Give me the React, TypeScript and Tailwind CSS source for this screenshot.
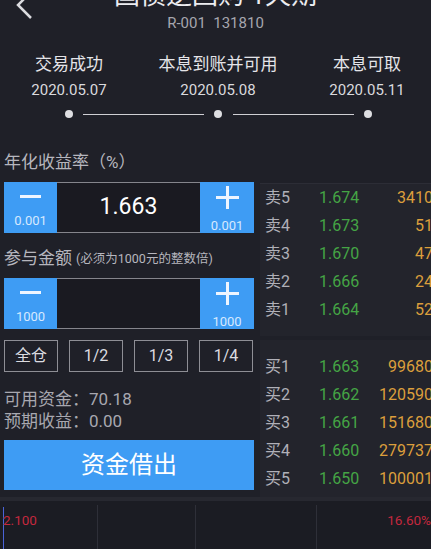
import React from "react";

const sells = [
  { label: "卖5", price: "1.674", vol: "3410" },
  { label: "卖4", price: "1.673", vol: "51" },
  { label: "卖3", price: "1.670", vol: "47" },
  { label: "卖2", price: "1.666", vol: "24" },
  { label: "卖1", price: "1.664", vol: "52" },
];

const buys = [
  { label: "买1", price: "1.663", vol: "99680" },
  { label: "买2", price: "1.662", vol: "120590" },
  { label: "买3", price: "1.661", vol: "151680" },
  { label: "买4", price: "1.660", vol: "279737" },
  { label: "买5", price: "1.650", vol: "100001" },
];

const steps = [
  { label: "交易成功", date: "2020.05.07" },
  { label: "本息到账并可用", date: "2020.05.08" },
  { label: "本息可取", date: "2020.05.11" },
];

const Stepper = ({ value, step }: { value: string; step: string }) => {
  return (
    <div className="flex h-[51px]">
      <div className="w-[53px] bg-[#3e9cf4] flex flex-col items-center">
        <div className="mt-[13px] w-[21px] h-[3px] bg-[#eef5ff]" />
        <div className="mt-[15px] text-[13px] leading-[15px] text-[#d6e9ff]">{step}</div>
      </div>
      <div className="flex-1 bg-[#1a1a21] border-y border-[#85858c] flex items-center justify-center text-[23px] text-white">
        {value}
      </div>
      <div className="w-[54px] bg-[#3e9cf4] flex flex-col items-center">
        <div className="mt-[4px] relative w-[23px] h-[23px]">
          <div className="absolute left-0 top-[10px] w-[23px] h-[3px] bg-[#eef5ff]" />
          <div className="absolute left-[10px] top-0 w-[3px] h-[23px] bg-[#eef5ff]" />
        </div>
        <div className="mt-[9px] text-[13px] leading-[15px] text-[#d6e9ff]">{step}</div>
      </div>
    </div>
  );
};

const BookRow = ({ label, price, vol }: { label: string; price: string; vol: string }) => {
  return (
    <div className="flex items-center h-[28px] text-[16px]">
      <div className="w-[54px] text-[#b0b0b8]">{label}</div>
      <div className="text-[#45a545]">{price}</div>
      <div className="flex-1 text-right text-[#dc9f3c] mr-[-2px]">{vol}</div>
    </div>
  );
};

const App = () => {
  return (
    <div className="w-[431px] h-[549px] overflow-hidden bg-[#1f2028] font-[family-name:Roboto,'Noto_Sans_CJK_SC',sans-serif]">
      {/* header */}
      <div className="relative h-[140px] flex flex-col">
        <svg className="absolute left-[14px] top-[-10px]" width="24" height="32" viewBox="0 0 24 32">
          <path d="M17 2 L4 15 L17 28" fill="none" stroke="#dcdce0" strokeWidth="2.5" />
        </svg>
        <div className="mt-[-20px] h-[30px] leading-[30px] text-center text-[26px] text-[#ececf0]">
          国债逆回购 1天期
        </div>
        <div className="mt-[5px] leading-[16px] text-center text-[15px] text-[#a6a6ae]">R-001&nbsp;&nbsp;131810</div>
        <div className="mt-[23px] ml-[9px] flex gap-[29px]">
          {steps.map((s) => (
            <div key={s.label} className="w-[120px] flex flex-col items-center">
              <div className="leading-[20px] text-[17px] text-[#e4e4e8] whitespace-nowrap">{s.label}</div>
              <div className="mt-[7px] leading-[18px] text-[15px] text-[#dadade]">{s.date}</div>
            </div>
          ))}
        </div>
        <div className="mt-[11px] ml-[65px] flex items-center">
          <div className="w-[8px] h-[8px] rounded-full bg-[#dedee2]" />
          <div className="ml-[10px] w-[121px] h-px bg-[#cfcfd4]" />
          <div className="ml-[10px] w-[8px] h-[8px] rounded-full bg-[#dedee2]" />
          <div className="ml-[11px] w-[121px] h-px bg-[#cfcfd4]" />
          <div className="ml-[10px] w-[8px] h-[8px] rounded-full bg-[#dedee2]" />
        </div>
      </div>

      {/* main */}
      <div className="flex h-[357px]">
        <div className="w-[260px] pl-[4px] pr-[6px] pt-[12px]">
          <div className="leading-[20px] text-[17px] text-[#b6b6be]">年化收益率（%）</div>
          <div className="mt-[10px]">
            <Stepper value="1.663" step="0.001" />
          </div>
          <div className="mt-[15px] h-[20px] flex items-end text-[#b6b6be]">
            <span className="text-[17px] leading-[20px]">参与金额</span>
            <span className="ml-[4px] text-[12.5px] leading-[18px]">(必须为1000元的整数倍)</span>
          </div>
          <div className="mt-[10px]">
            <Stepper value="" step="1000" />
          </div>
          <div className="mt-[11px] flex gap-[11px]">
            {["全仓", "1/2", "1/3", "1/4"].map((t) => (
              <div
                key={t}
                className="w-[54px] h-[32px] border border-[#8e8e95] flex items-center justify-center text-[16px] text-[#dcdce0]"
              >
                {t}
              </div>
            ))}
          </div>
          <div className="mt-[17px] leading-[20px] text-[17px] text-[#a8a8b0]">可用资金：70.18</div>
          <div className="mt-[2px] leading-[20px] text-[17px] text-[#a8a8b0]">预期收益：0.00</div>
          <div className="mt-[9px] h-[50px] bg-[#3e9cf4] flex items-center justify-center text-[24px] text-white">
            资金借出
          </div>
        </div>

        <div className="flex-1 pt-[43px] flex flex-col gap-[4px]">
          <div className="bg-[#23242c] pl-[5px] pb-[12px] border-t border-[#2c2d36]">
            {sells.map((r) => (
              <BookRow key={r.label} {...r} />
            ))}
          </div>
          <div className="flex-1 bg-[#23242c] pl-[5px] pt-[13px]">
            {buys.map((r) => (
              <BookRow key={r.label} {...r} />
            ))}
          </div>
        </div>
      </div>

      {/* chart */}
      <div className="relative h-[52px] border-t-[4px] border-[#272830] bg-[#1b1c23]">
        <svg className="absolute left-0 top-0" width="431" height="48">
          <line x1="97.5" y1="4" x2="97.5" y2="48" stroke="#2e2f38" />
          <line x1="195.5" y1="4" x2="195.5" y2="48" stroke="#2e2f38" />
          <line x1="316.5" y1="4" x2="316.5" y2="48" stroke="#2e2f38" />
          <line x1="3.5" y1="6" x2="3.5" y2="48" stroke="#4a63d8" />
        </svg>
        <div className="relative flex justify-between pl-[3px] pt-[11px] text-[13.5px] leading-[16px] text-[#c4283e]">
          <span>2.100</span>
          <span>16.60%</span>
        </div>
      </div>
    </div>
  );
};

export default App;
